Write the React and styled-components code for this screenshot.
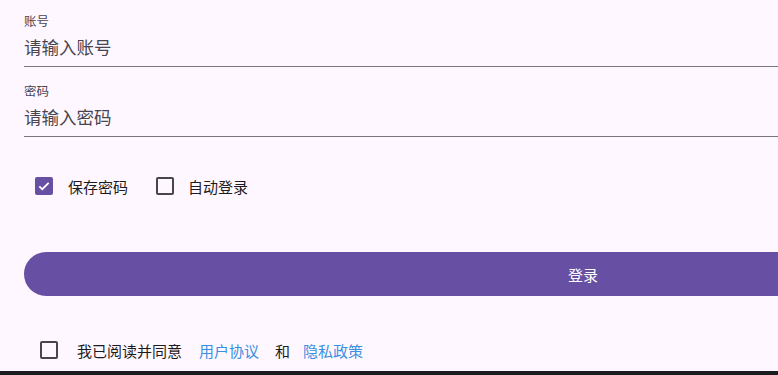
import React, { useState } from 'react';
import styled, { createGlobalStyle } from 'styled-components';

const GlobalStyle = createGlobalStyle`
  html, body {
    margin: 0;
    padding: 0;
    overflow: hidden;
    background: #fef7ff;
  }
  body {
    font-family: Roboto, "Noto Sans CJK SC", sans-serif;
    width: 778px;
    height: 375px;
  }
`;

const Screen = styled.div`
  width: 778px;
  height: 375px;
  overflow: hidden;
  display: flex;
  flex-direction: column;
  background: #fef7ff;
  border-bottom: 4px solid #1c1b1f;
  box-sizing: border-box;
`;

const Content = styled.div`
  width: 1118px;
  padding: 0 24px;
  display: flex;
  flex-direction: column;
`;

const Field = styled.div`
  display: flex;
  flex-direction: column;
  padding-top: ${p => p.top}px;
  border-bottom: 1px solid #79747e;
`;

const FieldLabel = styled.span`
  font-size: 12.5px;
  line-height: 16px;
  color: #49454f;
`;

const FieldInput = styled.input`
  border: none;
  outline: none;
  background: transparent;
  padding: 0;
  margin: 6px 0 6px;
  font-family: inherit;
  font-size: 17.5px;
  line-height: 24px;
  height: 24px;
  color: #1d1b20;
  &::placeholder {
    color: #49454f;
  }
`;

const OptionRow = styled.div`
  display: flex;
  align-items: center;
  margin-top: ${p => p.top}px;
  padding-left: ${p => p.indent}px;
`;

const Option = styled.label`
  display: flex;
  align-items: center;
  margin-right: ${p => p.gap}px;
  font-size: 15px;
  color: #1d1b20;
  cursor: pointer;
`;

const BoxTarget = styled.span`
  width: 40px;
  height: 40px;
  display: flex;
  align-items: center;
  justify-content: center;
  margin-right: ${p => p.gap}px;
`;

const Box = styled.span`
  width: 18px;
  height: 18px;
  box-sizing: border-box;
  border-radius: 2px;
  border: 2px solid ${p => (p.checked ? '#6750a4' : '#49454f')};
  background: ${p => (p.checked ? '#6750a4' : 'transparent')};
  display: flex;
  align-items: center;
  justify-content: center;
`;

const LoginButton = styled.button`
  margin-top: 46px;
  height: 44px;
  border: none;
  border-radius: 22px;
  background: #6750a4;
  color: #ffffff;
  font-family: inherit;
  font-size: 15px;
  cursor: pointer;
`;

const Text = styled.span`
  font-size: 15px;
  color: ${p => (p.link ? '#3b8fe0' : '#1d1b20')};
  margin-right: ${p => p.gap || 0}px;
`;

function Check({ checked, onToggle, gap }) {
  return (
    <BoxTarget gap={gap} onClick={onToggle}>
      <Box checked={checked}>
        {checked && (
          <svg width="14" height="14" viewBox="0 0 24 24">
            <path d="M4 12.5l5 5L20 6.5" fill="none" stroke="#fff" strokeWidth="3" />
          </svg>
        )}
      </Box>
    </BoxTarget>
  );
}

export default function App() {
  const [save, setSave] = useState(true);
  const [auto, setAuto] = useState(false);
  const [agree, setAgree] = useState(false);

  return (
    <>
      <GlobalStyle />
      <Screen>
        <Content>
          <Field top={14}>
            <FieldLabel>账号</FieldLabel>
            <FieldInput placeholder="请输入账号" />
          </Field>
          <Field top={17}>
            <FieldLabel>密码</FieldLabel>
            <FieldInput type="password" placeholder="请输入密码" />
          </Field>
          <OptionRow top={29} indent={0}>
            <Option gap={17}>
              <Check checked={save} onToggle={() => setSave(!save)} gap={4} />
              保存密码
            </Option>
            <Option gap={0}>
              <Check checked={auto} onToggle={() => setAuto(!auto)} gap={3} />
              自动登录
            </Option>
          </OptionRow>
          <LoginButton>登录</LoginButton>
          <OptionRow top={34} indent={5}>
            <Check checked={agree} onToggle={() => setAgree(!agree)} gap={8} />
            <Text gap={17}>我已阅读并同意</Text>
            <Text link gap={16}>用户协议</Text>
            <Text gap={13}>和</Text>
            <Text link>隐私政策</Text>
          </OptionRow>
        </Content>
      </Screen>
    </>
  );
}
